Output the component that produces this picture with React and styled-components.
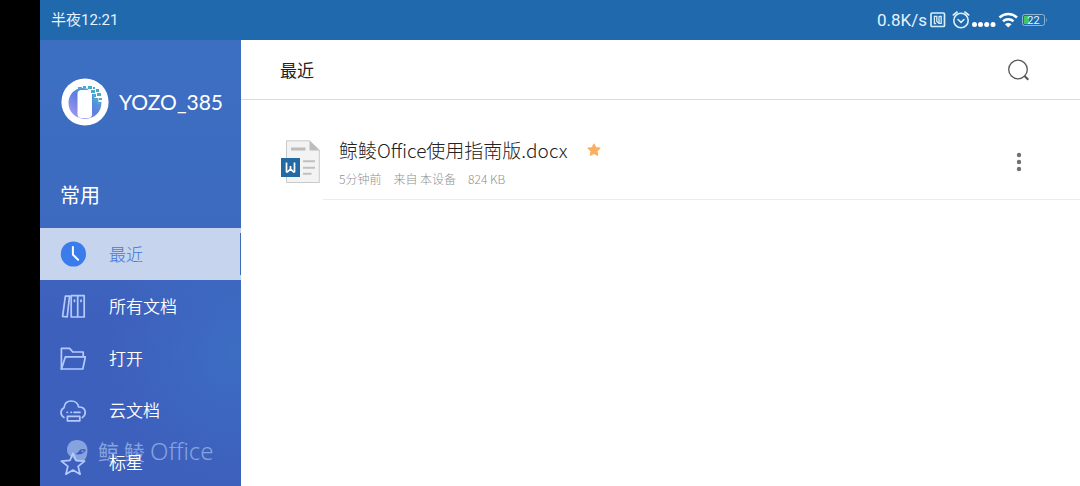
import React from "react";
import styled, { createGlobalStyle } from "styled-components";

const GlobalStyle = createGlobalStyle`
  * {
    box-sizing: border-box;
  }

  body {
    margin: 0;
    background: #000;
    font-family: "Noto Sans CJK SC", "Noto Sans", sans-serif;
    font-weight: 400;
    color: #222;
  }

  button {
    padding: 0;
    border: 0;
    background: none;
    font: inherit;
    color: inherit;
    cursor: pointer;
  }

  svg {
    display: block;
    flex: none;
  }
`;

const Screen = styled.div`
  display: flex;
  flex-direction: column;
  height: 100vh;
  margin-left: 40px;
  background: #fff;
  overflow: hidden;
`;

const StatusBar = styled.header`
  display: flex;
  flex: none;
  align-items: center;
  justify-content: space-between;
  height: 40px;
  padding: 0 32px 0 11px;
  background: #2069ac;
  color: #e4f3ff;
  font-family: Roboto, "Noto Sans CJK SC", sans-serif;
  font-size: 15px;
  line-height: 20px;
`;

const StatusIcons = styled.div`
  display: flex;
  align-items: center;
`;

const Speed = styled.span`
  margin-right: 3px;
  font-size: 17px;
`;

const Body = styled.div`
  display: flex;
  flex: 1;
  min-height: 0;
`;

const Sidebar = styled.aside`
  position: relative;
  flex: none;
  width: 201px;
  overflow: hidden;
  color: #fff;
  background:
    radial-gradient(circle at 100% 70%, rgba(60, 114, 198, 0.7), rgba(60, 114, 198, 0) 130px),
    linear-gradient(#3c6fc3 0%, #3c6bc0 38%, #3e60bd 62%, #3d60bc 100%);
`;

const Profile = styled.div`
  display: flex;
  align-items: center;
  gap: 10px;
  height: 124px;
  padding-left: 21px;
`;

const UserName = styled.span`
  font-family: Lato, "Noto Sans CJK SC", sans-serif;
  font-size: 21px;
  line-height: 28px;
`;

const SectionTitle = styled.h2`
  height: 64px;
  margin: 0;
  padding: 14px 20px 0;
  font-size: 20px;
  font-weight: 400;
  line-height: 34px;
`;

const Nav = styled.nav`
  position: relative;
  display: flex;
  flex-direction: column;
`;

const NavItem = styled.button`
  display: flex;
  flex: none;
  align-items: center;
  gap: 23px;
  width: 100%;
  height: 52px;
  padding-left: 20px;
  text-align: left;
  font-size: 17px;
  font-weight: ${(props) => (props.$active ? 300 : 350)};
  line-height: 24px;
  color: ${(props) => (props.$active ? "#4478d8" : "#fff")};
  background: ${(props) => (props.$active ? "#c6d4ed" : "transparent")};
`;

const ActiveMark = styled.span`
  width: 1px;
  height: 42px;
  margin-left: auto;
  background: #3b6cb4;
`;

const Watermark = styled.div`
  position: absolute;
  top: 397px;
  left: 26px;
  display: flex;
  align-items: center;
  gap: 5px;
  font-size: 21px;
  line-height: 28px;
  white-space: nowrap;
  color: #86a2df;
  pointer-events: none;
`;

const WatermarkName = styled.span`
  margin-left: 4px;
`;

const WatermarkLatin = styled.span`
  font-family: "Noto Sans", sans-serif;
  font-size: 24px;
  font-weight: 300;
`;

const Content = styled.main`
  flex: 1;
  min-width: 0;
`;

const Toolbar = styled.div`
  display: flex;
  align-items: center;
  justify-content: space-between;
  height: 60px;
  padding: 0 50px 0 39px;
  border-bottom: 1px solid #dcdcdc;
`;

const Title = styled.h1`
  margin: 0;
  font-size: 17px;
  font-weight: 400;
  line-height: 24px;
`;

const FileList = styled.ul`
  margin: 0;
  padding: 24px 0 0 40px;
  list-style: none;
`;

const FileRow = styled.li`
  display: flex;
`;

const FileIconBox = styled.div`
  width: 42px;
  padding-top: 16px;
`;

const FileBody = styled.div`
  display: flex;
  flex: 1;
  align-items: center;
  justify-content: space-between;
  height: 76px;
  padding: 0 57px 0 16px;
  border-bottom: 1px solid #ececec;
`;

const FileName = styled.div`
  display: flex;
  align-items: center;
  gap: 20px;
  font-size: 19px;
  font-weight: 300;
  line-height: 28px;
`;

const FileMeta = styled.div`
  display: flex;
  gap: 12px;
  margin-top: 6px;
  font-size: 12px;
  font-weight: 300;
  line-height: 18px;
  color: #8f8f8f;
`;

const RecentIcon = () => (
  <svg width="26" height="26" viewBox="0 0 26 26" fill="none">
    <circle cx="13.4" cy="13" r="12.6" fill="#3b7cec" />
    <path d="M12.9 6v7.6l5.2 5.2" stroke="#fff" strokeWidth="2" strokeLinecap="round" />
  </svg>
);

const LineIcon = ({ children }) => (
  <svg
    width="26"
    height="26"
    viewBox="0 0 26 26"
    fill="none"
    stroke="#b4caff"
    strokeWidth="1.7"
    strokeLinejoin="round"
    strokeLinecap="round"
  >
    {children}
  </svg>
);

const BooksIcon = () => (
  <LineIcon>
    <path d="M5.4 3 9.500 3.200 7.200 24 2.600 23.400zM11.200 2.600h6.500V24h-6.500zM17.700 2.600h6.500V24h-6.500z" />
    <path d="M14.500 7v1.400M21 7v1.400" />
  </LineIcon>
);

const FolderIcon = () => (
  <LineIcon>
    <path d="M1.400 24V3.400h8.200L12.800 7h10.400v4.800" />
    <path d="M5.400 11.800h20L22.800 24H1.400z" />
  </LineIcon>
);

const CloudIcon = () => (
  <LineIcon>
    <path d="M4 20.4C2 19.4 1 17.6 1 15.6c0-2.4 1.2-4 3-4.9C4.5 6.700 7.200 4 11.200 4c3.800 0 6.700 2.300 7.500 6 4 0 6.500 2.200 6.500 5.600 0 2.500-1 4-2.800 4.900" />
    <path d="M7.200 15.300h.2M11 15.300h.4M14 15.300h6M7.400 19.400h12.400v4.400H7.400z" />
  </LineIcon>
);

const StarIcon = () => (
  <LineIcon>
    <path d="M13 4.200l3 7.200 8.600.7-6.500 5.200 2 8-7.100-4.300-7.100 4.300 2-8-6.500-5.200 8.600-.7z" />
  </LineIcon>
);

const Avatar = () => (
  <svg width="48" height="48" viewBox="0 0 48 48">
    <defs>
      <linearGradient id="ring" x1="0" y1="1" x2="1" y2="0">
        <stop offset="0" stopColor="#b79cf5" />
        <stop offset="0.5" stopColor="#5c7fe0" />
        <stop offset="1" stopColor="#4fb4d4" />
      </linearGradient>
    </defs>
    <circle cx="24" cy="24" r="23.6" fill="#fff" />
    <path
      d="M22 10C13 10 7.500 17 7.500 25c0 9 7 15.800 16.500 15.800S40.400 34 40.400 25v-1h-3v-4h-4v-4h-4l-3-5.500z"
      fill="url(#ring)"
    />
    <rect x="16.500" y="12" width="14.500" height="28" rx="4" fill="#fff" />
    <g fill="#45acd0">
      <path d="M17 9h4v2h-4zM22 8h3v2h-3zM27 8h4v3h-4zM32 9h2v2h-2zM30 12h4v3h-4zM35 11h3v3h-3zM32 16h3v3h-3zM36 15h4v3h-4zM33 20h3v3h-3zM38 20h3v2h-3zM36 24h3v2h-3z" />
    </g>
  </svg>
);

const WhaleIcon = () => (
  <svg width="23" height="24" viewBox="0 0 23 24">
    <path
      fill="currentColor"
      fillRule="evenodd"
      d="M11 1c6 0 10.500 4 10.500 10 0 4-1 8-3.500 11-2 1-4 .5-6.500.5-3 0-2.500-2-5-4C3 17 1 14.500 1 11 1 5 5 1 11 1zm9 10c-2.500-1.800-5.600-1.300-7.200 1.200-1 1.600-2 2.200-3.800 2.500 2.800 1.700 8.600.8 11-3.700zm-3.500.2a1 1 0 1 1 0 2 1 1 0 0 1 0-2z"
    />
  </svg>
);

const SystemIcons = () => (
  <svg width="118" height="24" viewBox="0 0 118 24" fill="none" stroke="#d8eefa">
    {/* nfc */}
    <rect x="1" y="5" width="13.500" height="13.500" rx="1" strokeWidth="1.700" />
    <path d="M6.200 15.500H4.400V8.300h2.400v5.200l2.200 1.700M8.800 8.300h2.400v7H9V8.300" strokeWidth="1.300" />
    {/* alarm */}
    <circle cx="31" cy="12.500" r="7.200" strokeWidth="1.600" />
    <path d="M28 11.500l3 2.800 3-2.800M23.300 7l3.800-3M38.700 7l-3.800-3" strokeWidth="1.600" strokeLinecap="round" />
    {/* signal */}
    <g fill="#fff" stroke="none">
      <circle cx="44.500" cy="16.500" r="2.500" />
      <circle cx="50.500" cy="16.500" r="2.500" />
      <circle cx="56.700" cy="16.500" r="2.500" />
      <circle cx="63" cy="16.500" r="2.500" />
    </g>
    {/* wifi */}
    <path d="M69.500 9.500c5-4.600 12.500-4.600 17.500 0M73 13.200c3-2.700 7.500-2.700 10.500 0" stroke="#fff" strokeWidth="2.500" />
    <path d="M78.200 19.500l-3.200-3.300c1.900-1.500 4.600-1.500 6.500 0z" fill="#fff" stroke="none" />
    {/* battery */}
    <rect x="92.500" y="6.500" width="22" height="11" rx="2" stroke="#8db4d3" />
    <rect x="94" y="8" width="5" height="8" fill="#43c463" stroke="none" />
    <path d="M116.500 10.500v3" stroke="#6d9dc6" />
    <text x="103.500" y="16" textAnchor="middle" fontFamily="Roboto" fontSize="11" fill="#e4f3ff" stroke="none">
      22
    </text>
  </svg>
);

const SearchIcon = () => (
  <svg width="22" height="24" viewBox="0 0 22 24" fill="none" stroke="#555">
    <circle cx="10" cy="11.500" r="9.300" strokeWidth="1.300" />
    <path d="M16.500 18l3.800 3.800" strokeWidth="2" />
  </svg>
);

const MoreIcon = () => (
  <svg width="8" height="20" viewBox="0 0 8 20" fill="#707070">
    <circle cx="4" cy="3" r="2.200" />
    <circle cx="4" cy="10" r="2.200" />
    <circle cx="4" cy="17" r="2.200" />
  </svg>
);

const DocIcon = () => (
  <svg width="40" height="44" viewBox="0 0 40 44" fill="none">
    <path d="M5.500.8h23L38.300 10v32.500H5.500z" fill="#f3f3f3" stroke="#c9c9c9" />
    <path d="M28.500.8 38.500 10.500h-10z" fill="#bdbdbd" />
    <path d="M10 9h14.500" stroke="#bcbcbc" strokeWidth="3" />
    <path d="M22 21.300h12M22 27.700h12M22 33.800h8.500" stroke="#c0c0c0" strokeWidth="2" />
    <path d="M0 18h19v19H0z" fill="#2369a4" />
    <path
      d="M5.500 22.500v9.300h1l3-2.800 3 2.800h1v-9.300M9.500 29v-3"
      stroke="#fff"
      strokeWidth="1.700"
      strokeLinejoin="round"
    />
  </svg>
);

const FavouriteIcon = () => (
  <svg width="14" height="14" viewBox="0 0 14 14">
    <path
      d="M7 1.200l1.700 3.600 4 .5-2.900 2.800.7 4L7 10.200l-3.500 1.900.7-4L1.300 5.300l4-.5z"
      fill="#fcae60"
      stroke="#fcae60"
      strokeWidth="1.400"
      strokeLinejoin="round"
    />
  </svg>
);

const navItems = [
  { label: "最近", Icon: RecentIcon, active: true },
  { label: "所有文档", Icon: BooksIcon },
  { label: "打开", Icon: FolderIcon },
  { label: "云文档", Icon: CloudIcon },
  { label: "标星", Icon: StarIcon },
];

const App = () => {
  return (
    <>
      <GlobalStyle />
      <Screen>
        <StatusBar>
          <span>半夜12:21</span>
          <StatusIcons>
            <Speed>0.8K/s</Speed>
            <SystemIcons />
          </StatusIcons>
        </StatusBar>
        <Body>
          <Sidebar>
            <Watermark>
              <WhaleIcon />
              <WatermarkName>鲸</WatermarkName>
              <span>鲮</span>
              <WatermarkLatin>Office</WatermarkLatin>
            </Watermark>
            <Profile>
              <Avatar />
              <UserName>YOZO_385</UserName>
            </Profile>
            <SectionTitle>常用</SectionTitle>
            <Nav>
              {navItems.map(({ label, Icon, active }) => (
                <NavItem key={label} type="button" $active={active}>
                  <Icon />
                  {label}
                  {active && <ActiveMark />}
                </NavItem>
              ))}
            </Nav>
          </Sidebar>
          <Content>
            <Toolbar>
              <Title>最近</Title>
              <button type="button" aria-label="搜索">
                <SearchIcon />
              </button>
            </Toolbar>
            <FileList>
              <FileRow>
                <FileIconBox>
                  <DocIcon />
                </FileIconBox>
                <FileBody>
                  <div>
                    <FileName>
                      <span>鲸鲮Office使用指南版.docx</span>
                      <FavouriteIcon />
                    </FileName>
                    <FileMeta>
                      <span>5分钟前</span>
                      <span>来自 本设备</span>
                      <span>824 KB</span>
                    </FileMeta>
                  </div>
                  <button type="button" aria-label="更多">
                    <MoreIcon />
                  </button>
                </FileBody>
              </FileRow>
            </FileList>
          </Content>
        </Body>
      </Screen>
    </>
  );
};

export default App;
